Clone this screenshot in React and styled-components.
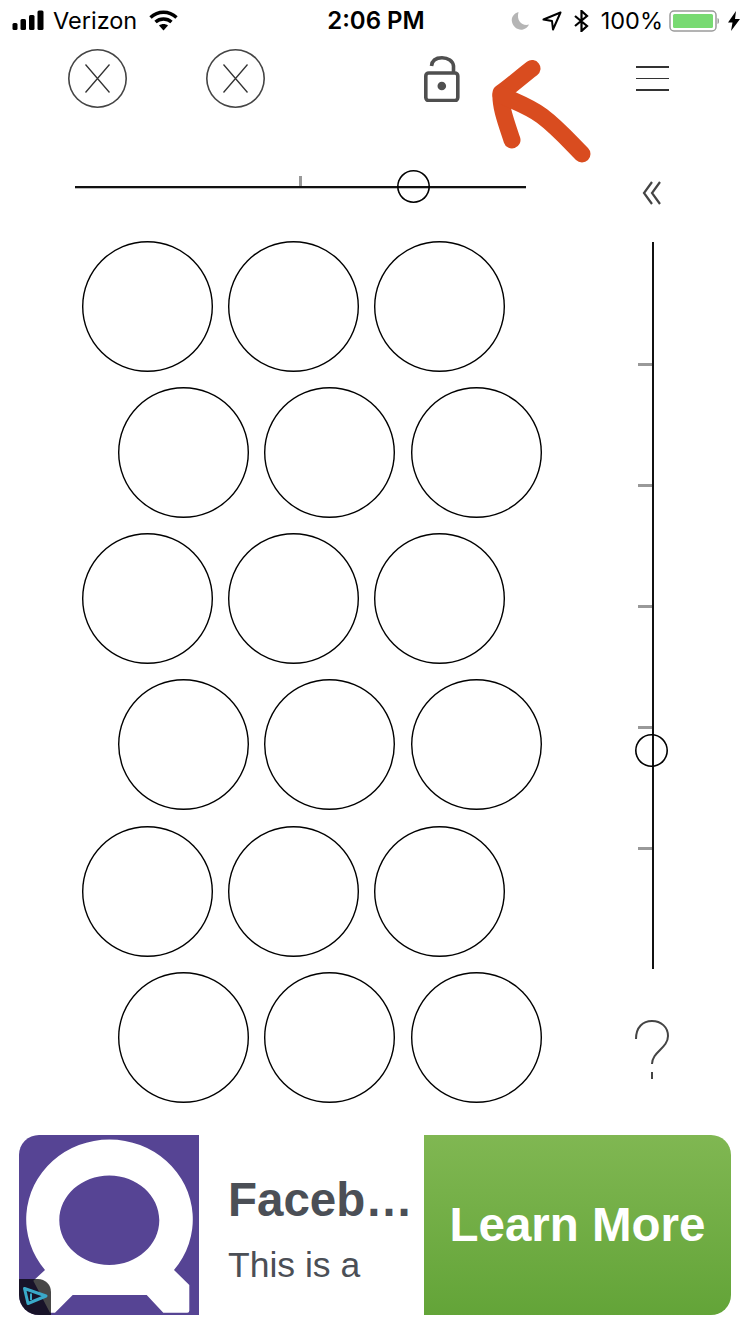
import React from "react";
import styled, { createGlobalStyle } from "styled-components";

const Global = createGlobalStyle`
  html, body { margin: 0; padding: 0; background: #fff; }
`;

const Page = styled.div`
  position: relative;
  width: 750px;
  height: 1334px;
  overflow: hidden;
  background: #fff;
  display: flex;
  flex-direction: column;
`;

/* Status bar */
const StatusBar = styled.div`
  height: 41px;
  flex: none;
  display: grid;
  grid-template-columns: 1fr auto 1fr;
  align-items: center;
  padding: 0 10px 0 12px;
  font-family: Inter, "Liberation Sans", sans-serif;
  font-size: 23.5px;
  color: #000;
`;
const StatusSide = styled.div`
  display: flex;
  align-items: center;
  justify-content: ${(p) => (p.$end ? "flex-end" : "flex-start")};
  gap: ${(p) => p.$gap || 0}px;
`;
const Clock = styled.div`
  font-weight: 600;
  font-size: 24px;
`;
const Carrier = styled.span`
  margin: 0 12px 0 9px;
`;
const Percent = styled.span`
  margin: 0 -6px 0 0;
`;
const BatteryWrap = styled.span`
  display: flex;
  margin-right: -3px;
`;

/* Toolbar */
const Toolbar = styled.div`
  height: 75px;
  flex: none;
  display: flex;
  align-items: center;
  padding-left: 68px;
`;
const CloseButton = styled.div`
  width: 59px;
  height: 59px;
  border-radius: 50%;
  box-shadow: inset 0 0 0 1.6px #444;
  margin-right: ${(p) => p.$after}px;
  display: flex;
  align-items: center;
  justify-content: center;
`;
const LockSlot = styled.div`
  width: 36px;
  height: 46px;
  margin-right: 176px;
  display: flex;
`;
const Burger = styled.div`
  width: 33px;
  display: flex;
  flex-direction: column;
  gap: 10px;
`;
const BurgerLine = styled.div`
  height: 1.5px;
  background: #333;
`;

/* Body */
const Body = styled.div`
  flex: 1;
  display: flex;
  min-height: 0;
`;
const LeftColumn = styled.div`
  width: 620px;
  flex: none;
  padding-top: 70px;
  box-sizing: border-box;
`;
const HTrack = styled.div`
  position: relative;
  width: 451px;
  height: 2px;
  margin-left: 75px;
  background: #111;
  box-shadow: 0 1px 0 #bbb;
`;
const HTick = styled.div`
  position: absolute;
  left: 224px;
  top: -10px;
  width: 3px;
  height: 10px;
  background: #999;
`;
const Knob = styled.div`
  position: absolute;
  width: 33px;
  height: 33px;
  border-radius: 50%;
  box-shadow: inset 0 0 0 1.6px #000;
`;
const HKnob = styled(Knob)`
  left: 321.5px;
  top: -16px;
`;
const Rows = styled.div`
  margin-top: 52.5px;
  display: flex;
  flex-direction: column;
  gap: 15.3px;
`;
const Row = styled.div`
  display: flex;
  gap: 15.3px;
  padding-left: ${(p) => (p.$shift ? 118 : 81.5)}px;
`;
const Dot = styled.div`
  width: 131px;
  height: 131px;
  border-radius: 50%;
  box-shadow: inset 0 0 0 1.4px #000;
  flex: none;
`;
const RightColumn = styled.div`
  flex: 1;
  display: flex;
  flex-direction: column;
  align-items: flex-start;
  padding-left: 14px;
  padding-top: 65px;
`;
const Chevrons = styled.svg`
  display: block;
  margin-left: 8px;
`;
const VTrack = styled.div`
  position: relative;
  width: 2px;
  height: 727px;
  margin: 37px 0 0 18px;
  background: #111;
`;
const VTick = styled.div`
  position: absolute;
  left: -14px;
  top: ${(p) => p.$top}px;
  width: 14px;
  height: 2.5px;
  background: #999;
`;
const VKnob = styled(Knob)`
  left: -17px;
  top: 492px;
`;
const Question = styled.svg`
  display: block;
  margin: 50px 0 0 -2px;
`;

/* Ad banner */
const Ad = styled.div`
  height: 180px;
  flex: none;
  margin: 0 19px 19px;
  display: flex;
`;
const AdIcon = styled.svg`
  width: 180px;
  height: 180px;
  flex: none;
  display: block;
`;
const AdText = styled.div`
  width: 225px;
  flex: none;
  box-sizing: border-box;
  padding: 38px 0 0 29px;
  font-family: "Liberation Sans", Arial, sans-serif;
  color: #4b4f56;
`;
const AdTitle = styled.div`
  font-size: 47.5px;
  font-weight: 700;
  line-height: 54px;
  white-space: nowrap;
`;
const AdLine = styled.div`
  font-size: 35.5px;
  line-height: 40px;
  margin-top: 18px;
  white-space: nowrap;
`;
const AdButton = styled.div`
  flex: 1;
  display: flex;
  align-items: center;
  justify-content: center;
  padding-bottom: 1px;
  box-sizing: border-box;
  border-radius: 0 20px 20px 0;
  background: linear-gradient(#80b752, #63a438);
  color: #fff;
  font-family: "Liberation Sans", Arial, sans-serif;
  font-weight: 700;
  font-size: 47.5px;
`;

/* Hand-drawn annotation */
const Arrow = styled.svg`
  position: absolute;
  left: 480px;
  top: 50px;
`;

const CrossIcon = () => (
  <svg width="25" height="29" viewBox="0 0 25 29" fill="none" stroke="#333" strokeWidth="1.3">
    <path d="M.5.5 24.500 28.500M24.500.5 .5 28.500" />
  </svg>
);

const SignalIcon = () => (
  <svg width="32" height="21" viewBox="0 0 32 21" fill="#000">
    <rect x="0.5" y="13" width="5" height="7" rx="1.5" />
    <rect x="8.5" y="9" width="5.5" height="11" rx="1.5" />
    <rect x="17" y="5" width="5.5" height="15" rx="1.5" />
    <rect x="25.5" y="0.5" width="6" height="19.5" rx="1.5" />
  </svg>
);

const WifiIcon = () => (
  <svg width="29" height="21" viewBox="0 0 29 21" fill="none" stroke="#000" strokeWidth="3.4">
    <path d="M1.5 7.5C9 .5 20 .5 27.500 7.500" />
    <path d="M6.500 12C11 8 18 8 22.500 12" />
    <path d="M14.500 20.500 10 15.500C12.500 13.500 16.500 13.500 19 15.500Z" fill="#000" stroke="none" />
  </svg>
);

const MoonIcon = () => (
  <svg width="19" height="20" viewBox="0 0 19 20">
    <path d="M7.500 1C2.500 2.500 0 6.500 1 11c1 5 6 8.500 11 7.500 2.500-.5 5-2.500 6-5-6 2-13-3-10.500-12.500Z" fill="#b5b5b5" />
  </svg>
);

const LocationIcon = () => (
  <svg width="20" height="20" viewBox="0 0 20 20" fill="none" stroke="#000" strokeWidth="2">
    <path d="M18.500 1.500 1.500 8.500l8.500 1.500 1 8.500Z" strokeLinejoin="round" />
  </svg>
);

const BluetoothIcon = () => (
  <svg width="15" height="22" viewBox="0 0 15 22" fill="none" stroke="#000" strokeWidth="2.200">
    <path d="M1 6 13 16 7.500 21V1L13 6 1 16" />
  </svg>
);

const BatteryIcon = () => (
  <svg width="50" height="22" viewBox="0 0 50 22">
    <rect x="1" y="1" width="46" height="20" rx="4" fill="#fff" stroke="#9a9a9a" strokeWidth="1.500" />
    <rect x="4" y="4" width="40" height="14" rx="1.500" fill="#78da72" />
    <path d="M48.500 8c1.300.3 1.500 1.500 1.500 3s-.2 2.700-1.500 3Z" fill="#9a9a9a" />
  </svg>
);

const BoltIcon = () => (
  <svg width="12" height="20" viewBox="0 0 12 20">
    <path d="M8 0 0 11.500h4.500L3 20l9-12H7Z" fill="#000" />
  </svg>
);

const LockIcon = () => (
  <svg width="36" height="46" viewBox="0 0 36 46" fill="none" stroke="#4f4f4f" strokeWidth="3.600">
    <rect x="1.800" y="17" width="32" height="27.500" rx="3" />
    <path d="M7.500 10C8 4.500 12 1.800 18 1.800S29 5 29.500 10V17" />
    <circle cx="17.800" cy="30" r="4.300" fill="#4f4f4f" stroke="none" />
  </svg>
);

const rowKeys = [0, 1, 2, 3, 4, 5];
const ticks = [121, 242, 363, 484, 605];

export default function App() {
  return (
    <Page>
      <Global />
      <StatusBar>
        <StatusSide>
          <SignalIcon />
          <Carrier>Verizon</Carrier>
          <WifiIcon />
        </StatusSide>
        <Clock>2:06 PM</Clock>
        <StatusSide $end $gap={12}>
          <MoonIcon />
          <LocationIcon />
          <BluetoothIcon />
          <Percent>100%</Percent>
          <BatteryWrap><BatteryIcon /></BatteryWrap>
          <BoltIcon />
        </StatusSide>
      </StatusBar>

      <Toolbar>
        <CloseButton $after={79}><CrossIcon /></CloseButton>
        <CloseButton $after={159}><CrossIcon /></CloseButton>
        <LockSlot><LockIcon /></LockSlot>
        <Burger>
          <BurgerLine />
          <BurgerLine />
          <BurgerLine />
        </Burger>
      </Toolbar>

      <Body>
        <LeftColumn>
          <HTrack>
            <HTick />
            <HKnob />
          </HTrack>
          <Rows>
            {rowKeys.map((r) => (
              <Row key={r} $shift={r % 2 === 1}>
                <Dot />
                <Dot />
                <Dot />
              </Row>
            ))}
          </Rows>
        </LeftColumn>
        <RightColumn>
          <Chevrons width="20" height="24" viewBox="0 0 20 24" fill="none" stroke="#444" strokeWidth="2.200">
            <path d="M10 1 2 12l8 11M18 1 10 12l8 11" />
          </Chevrons>
          <VTrack>
            {ticks.map((t) => (
              <VTick key={t} $top={t} />
            ))}
            <VKnob />
          </VTrack>
          <Question width="40" height="62" viewBox="0 0 40 62" fill="none" stroke="#444" strokeWidth="2">
            <path d="M4 20C4 8 11 2 20 2s16 6 16 15c0 12-16 16-16 28" />
            <path d="M20 53v7" />
          </Question>
        </RightColumn>
      </Body>

      <Ad>
        <AdIcon viewBox="0 0 180 180">
          <path d="M20 0H180V180H20A20 20 0 0 1 0 160V20A20 20 0 0 1 20 0Z" fill="#564494" />
          <path
            fillRule="evenodd"
            fill="#fff"
            d="M26 135A83.300 80 0 1 1 155 135L170.300 150V175.700Q170.300 177.700 168.300 177.700H144.300L127.700 160H53.700L36 177.700H31L14.300 145.700ZM90.300 40.500C62.700 40.500 40.300 60.500 40.300 85.300C40.300 110 62.700 130 90.300 130C117.900 130 140.300 110 140.300 85.300C140.300 60.500 117.900 40.500 90.300 40.500Z"
          />
          <path d="M0 144H19A13 13 0 0 1 32 157V180H20A20 20 0 0 1 0 160Z" fill="#000" fillOpacity=".72" />
          <path d="M5.500 153.500 27 161 9 168.500Z" fill="none" stroke="#3aa9c9" strokeWidth="3" strokeLinejoin="round" />
          <path d="M12 158.500V165" fill="none" stroke="#3aa9c9" strokeWidth="2" />
        </AdIcon>
        <AdText>
          <AdTitle>Faceb…</AdTitle>
          <AdLine>This is a</AdLine>
        </AdText>
        <AdButton>Learn More</AdButton>
      </Ad>

      <Arrow width="120" height="115" viewBox="0 0 120 115" fill="none" stroke="#d94c1f" strokeWidth="17" strokeLinecap="round" strokeLinejoin="round">
        <path d="M52 18.500 C 42 26 31 36 21 43 C 20 56 26 72 32 90" />
        <path d="M21 45 C 36 52 50 57 62 66 C 78 78 90 92 102 104" />
      </Arrow>
    </Page>
  );
}
